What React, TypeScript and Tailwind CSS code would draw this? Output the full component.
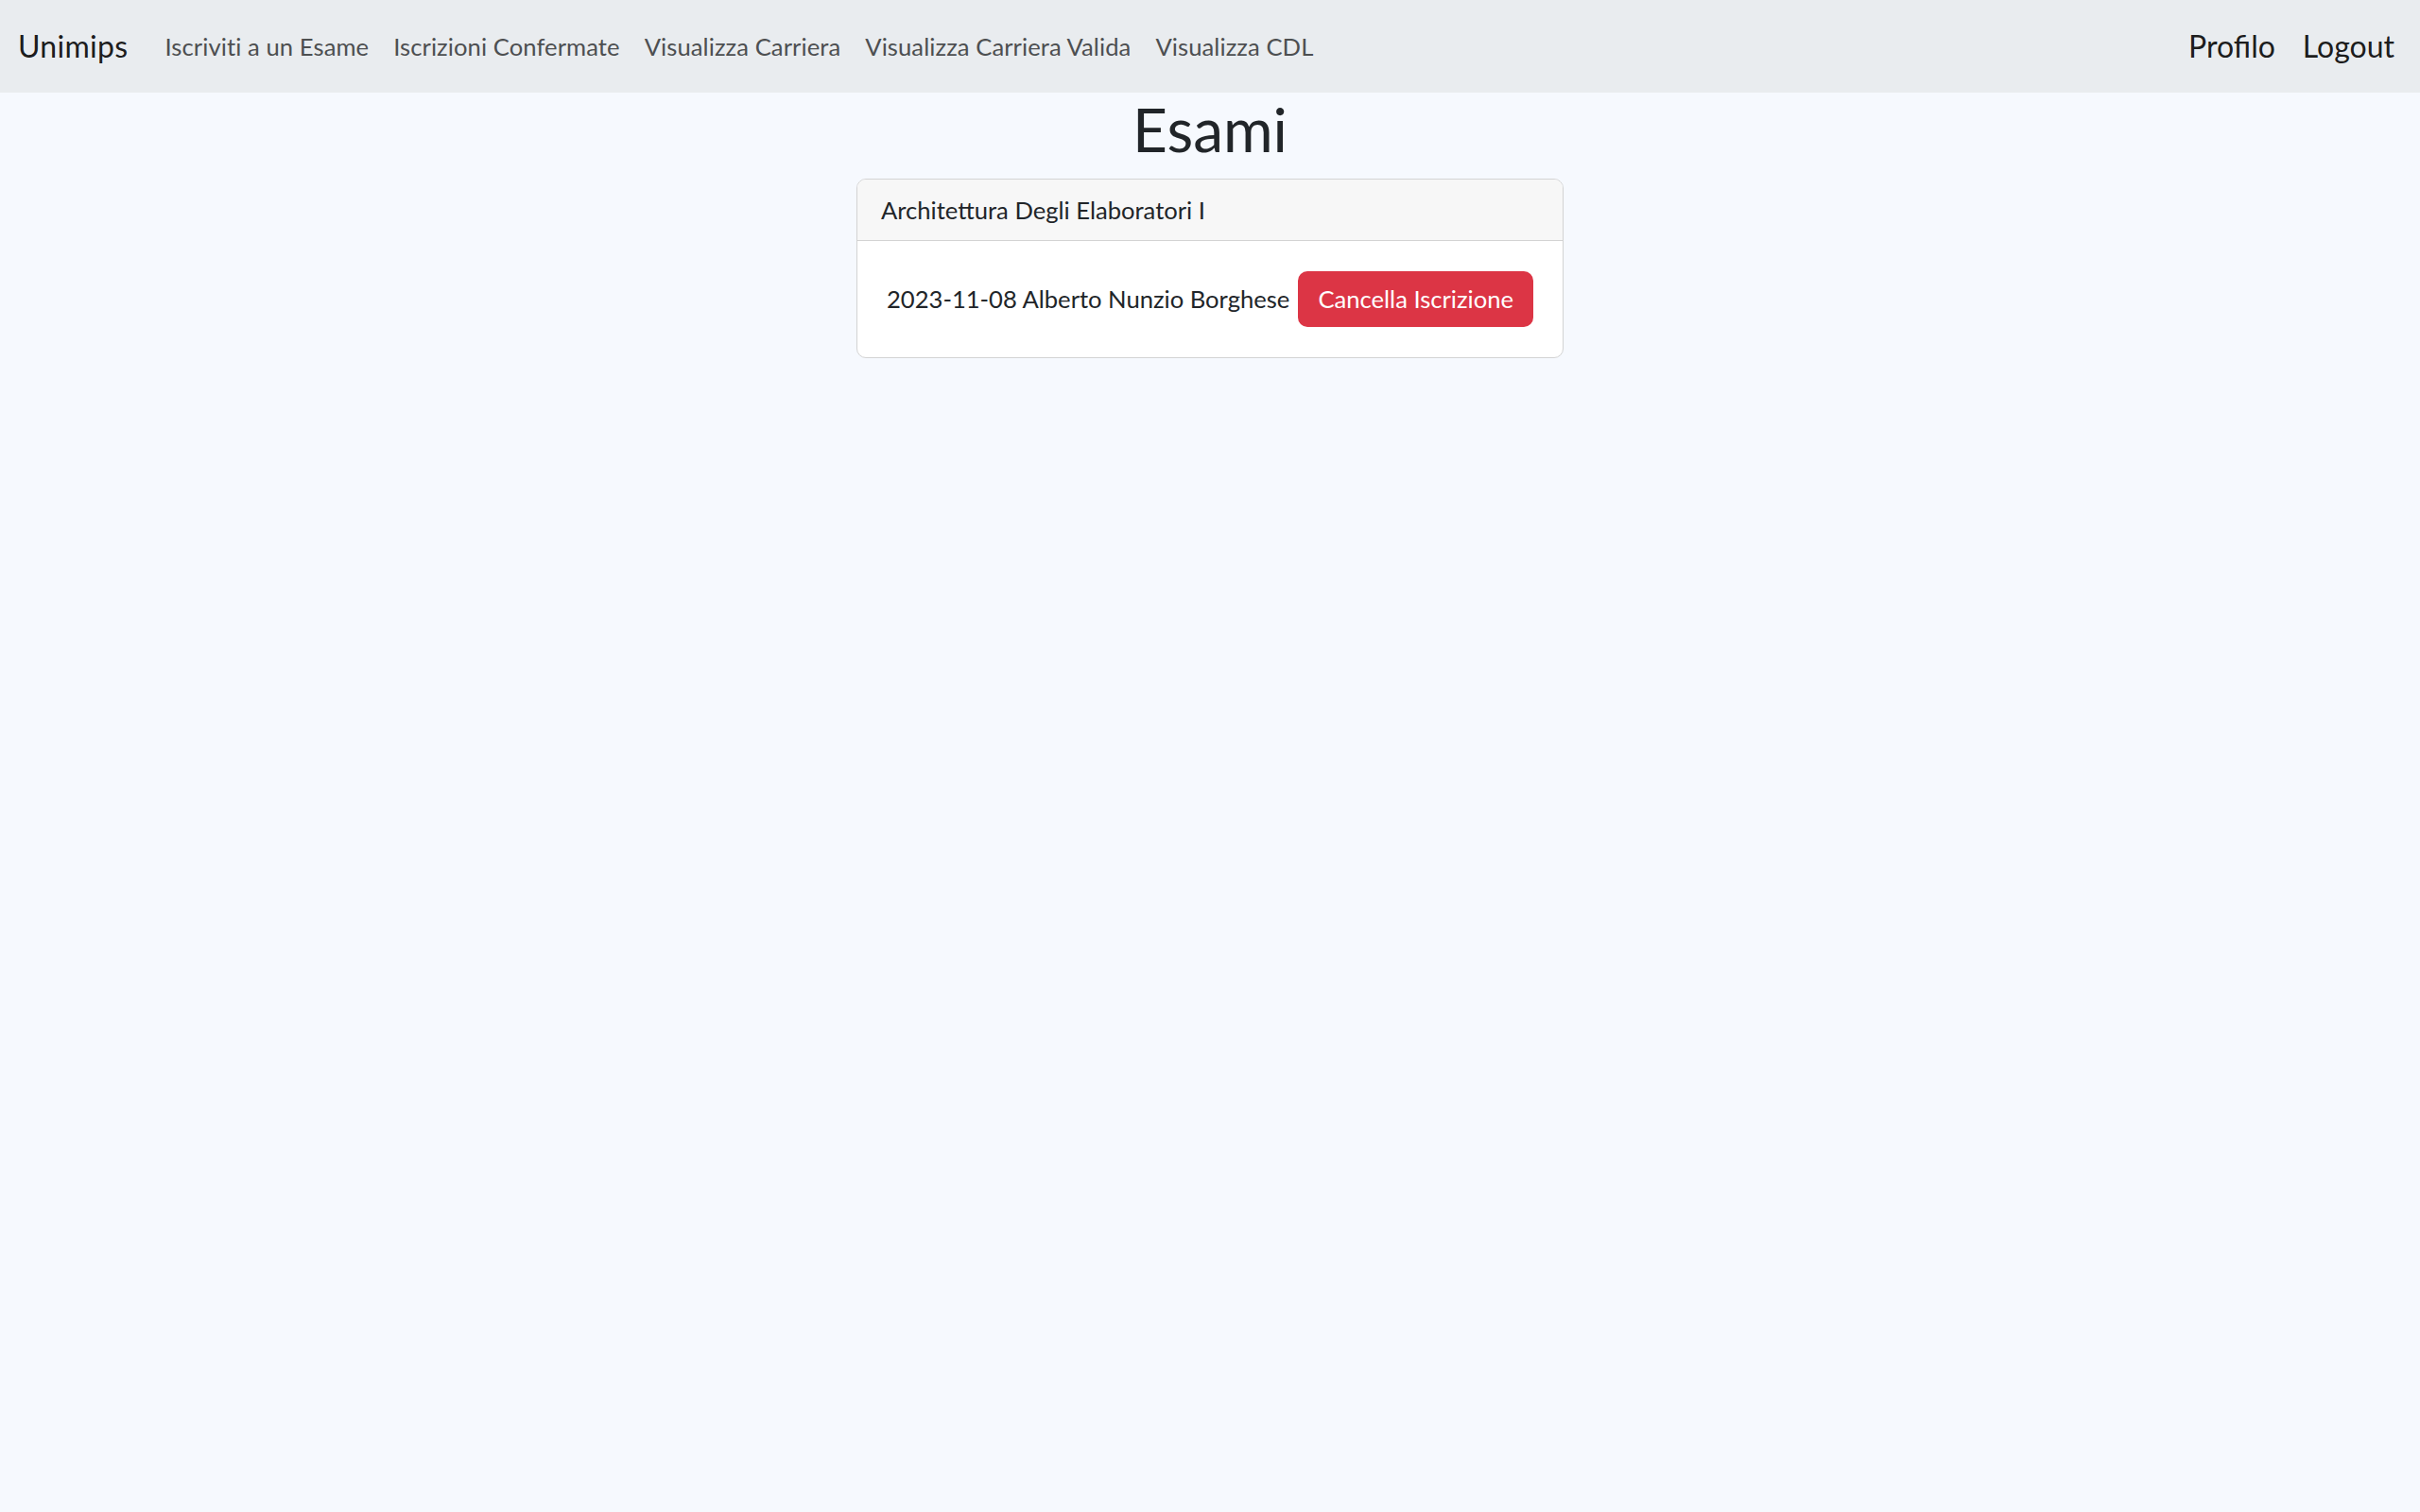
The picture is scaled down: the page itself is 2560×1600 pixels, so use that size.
const navLinks = [
  "Iscriviti a un Esame",
  "Iscrizioni Confermate",
  "Visualizza Carriera",
  "Visualizza Carriera Valida",
  "Visualizza CDL",
];

export default function App() {
  return (
    <div className="min-h-screen bg-[#f6f9fe] text-[#212529] font-['Lato',sans-serif]">
      <nav className="h-[98px] bg-[#e9ecef] flex items-center justify-between px-[19px]">
        <div className="flex items-center">
          <a href="#" className="text-[32px] tracking-[0.3px] text-black/90 mr-[26px]">
            Unimips
          </a>
          <ul className="flex items-center">
            {navLinks.map((link) => (
              <li key={link}>
                <a
                  href="#"
                  className="block px-[13px] text-[25.6px] tracking-[0.08px] text-[#4d4f51]"
                >
                  {link}
                </a>
              </li>
            ))}
          </ul>
        </div>
        <div className="flex items-center gap-[29px] pr-[8px]">
          <a href="#" className="text-[32px] text-black/90">
            Profilo
          </a>
          <a href="#" className="text-[32px] text-black/90">
            Logout
          </a>
        </div>
      </nav>

      <main className="flex flex-col items-center">
        <h1 className="text-[64px] leading-[78px] mb-[13px]">Esami</h1>
        <div className="w-[748px] bg-white border border-[#d3d3d3] rounded-[10px] overflow-hidden">
          <div className="h-[65px] bg-[#f7f7f7] border-b border-[#d3d3d3] px-[25px] flex items-center text-[25.6px]">
            Architettura Degli Elaboratori I
          </div>
          <div className="h-[123px] px-[31px] flex items-center justify-between text-[25.6px]">
            <span>2023-11-08 Alberto Nunzio Borghese</span>
            <button className="h-[59px] px-[21px] bg-[#dc3545] text-white rounded-[10px]">
              Cancella Iscrizione
            </button>
          </div>
        </div>
      </main>
    </div>
  );
}
